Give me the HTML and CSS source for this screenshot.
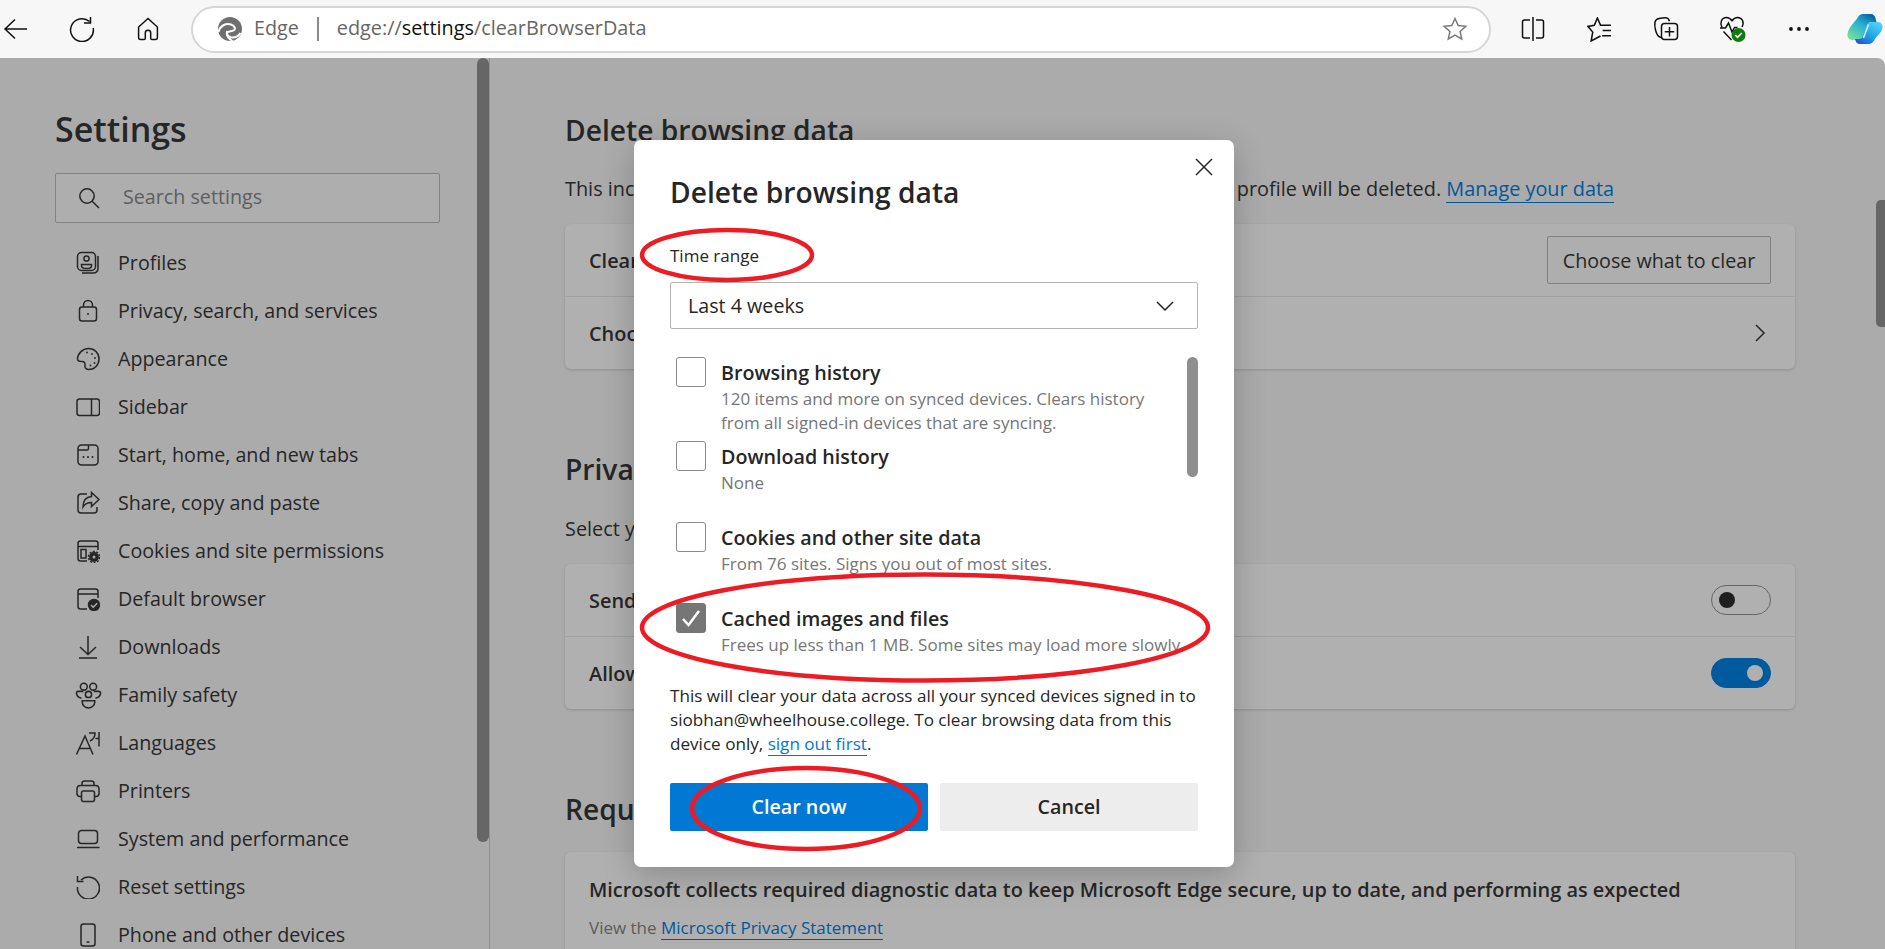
FILE: index.html
```html
<!DOCTYPE html>
<html lang="en">
<head>
  <meta charset="UTF-8" />
  <title>Settings</title>
  <link rel="stylesheet" href="styles.css">
</head>
<body>
  <header class="toolbar">
    <div class="nav-btns">
      <span class="tb-btn"><svg width="26" height="26" viewBox="0 0 26 26"><path d="M24 13H2M12 3.5L2 13l10 9.5"/></svg></span>
      <span class="tb-btn"><svg width="26" height="26" viewBox="0 0 26 26"><path d="M20.5 5.5a11.4 11.4 0 1 0 3.7 6.5M21.5 1v6h-6.5"/></svg></span>
      <span class="tb-btn"><svg width="24" height="26" viewBox="0 0 24 26"><path d="M12 2.5L2.6 11v10.5c0 1.2.8 2 2 2H8c.9 0 1.3-.6 1.3-1.3V17a2.7 2.7 0 0 1 5.4 0v5.200c0 .7.4 1.300 1.300 1.300h3.400c1.200 0 2-.8 2-2V11z"/></svg></span>
    </div>
    <div class="address">
      <svg class="edge-logo" width="26" height="26" viewBox="0 0 26 26">
        <circle cx="13" cy="13" r="12" class="logo-disc"/>
        <path d="M1.500 16C3 9.500 9 7 14 8.500c4 1.200 5 4.500 2.500 6-2 1.200-5.500.5-6.500 2.500-1.200 2.500 2 6 5.500 8 M10 15c-1 3 1 6 4.500 6.500 3 .4 6.500-.6 9-4.500"/>
      </svg>
      <span class="addr-label">Edge</span>
      <span class="addr-sep"></span>
      <span class="addr-url">edge://<b>settings</b>/clearBrowserData</span>
      <svg class="addr-star" width="26" height="26" viewBox="0 0 26 26"><path d="M13 2.500l3.200 7 7.600.8-5.700 5.100 1.600 7.500-6.700-3.900-6.700 3.900 1.600-7.500-5.700-5.100 7.600-.8z"/></svg>
    </div>
    <div class="tool-btns">
      <span class="tb-btn"><svg width="24" height="26" viewBox="0 0 24 26"><path d="M9 4H3.500C2.400 4 1.500 4.900 1.500 6v14c0 1.100.9 2 2 2H9M15 4h5.500c1.100 0 2 .9 2 2v14c0 1.100-.9 2-2 2H15M12 1v24"/></svg></span>
      <span class="tb-btn"><svg width="25" height="25" viewBox="0 0 24 24"><path d="M23 8H13L10 1 7 8 .8 9l4.700 5.500L4 23l9-4.800M15 13h8M14.500 18H23"/></svg></span>
      <span class="tb-btn"><svg width="26" height="26" viewBox="0 0 26 26"><path d="M8 21.500C5.500 21 3.500 18 2.500 14 1.800 11 1.400 8.500 2 6c.5-2 2-3 4-3.500 2.500-.6 5.500-1 7-.8 1.800.2 3 1.500 3.500 3.500"/><rect x="8.500" y="7.500" width="16" height="16" rx="3"/><path d="M16.500 11v9.500M11.800 15.700h9.500"/></svg></span>
      <span class="tb-btn"><svg width="28" height="28" viewBox="0 0 28 28"><path d="M3 12.500C.5 8 2.500 2.500 7.500 2.500c2.500 0 4.300 1.500 5.500 3.200 1.200-1.700 3-3.200 5.500-3.200 5 0 7 5 4.500 9.500M1 13h5.500L9.500 8l3.500 9 2.500-4.500h3M4.500 16.500l8 8.500"/><circle cx="19.500" cy="20" r="7" class="health-dot"/><path d="M16.200 20l2.300 2.300 4.300-4.300" class="health-tick"/></svg></span>
      <span class="tb-btn"><svg width="22" height="6" viewBox="0 0 22 6"><circle cx="3" cy="3" r="1.900" class="solid"/><circle cx="11" cy="3" r="1.900" class="solid"/><circle cx="19" cy="3" r="1.900" class="solid"/></svg></span>
      <span class="tb-btn copilot">
        <svg width="36" height="32" viewBox="0 0 36 32">
          <defs>
            <linearGradient id="cpA" x1="0.800" y1="0" x2="0.100" y2="1"><stop offset="0" stop-color="#0b5f9e"/><stop offset="0.400" stop-color="#22b0d4"/><stop offset="1" stop-color="#7be39a"/></linearGradient>
            <linearGradient id="cpB" x1="0.800" y1="0.100" x2="0.200" y2="1"><stop offset="0" stop-color="#4ccdf7"/><stop offset="0.600" stop-color="#1b9de2"/><stop offset="1" stop-color="#2a4fd8"/></linearGradient>
          </defs>
          <path class="cp-a" d="M11 4C12 2 14 1 16 1h8c2 0 4 2 4.500 4l1 4h-5c-2 0-3.500 1-4 3l-4 13c-.5 1.500-2 2-3.500 2H5c-3 0-5-3-4.500-6C1.500 14 8 9 11 4z"/>
          <path class="cp-b" d="M24.500 9H31c3 0 5 3 4.500 6-1 5-5 7-7.500 11-1.500 3-3.500 5-7 5h-8c-2.500 0-4-1.500-4.500-3.500l-.5-1.500h4c2 0 3.500-1 4-3l4-11c.5-2 2-3 4.500-3z"/>
          <path class="cp-slit" d="M21.500 11.500L16.500 25"/>
        </svg>
      </span>
    </div>
  </header>

  <div class="page">
    <aside class="sidebar">
      <div class="side-content">
        <h1 class="side-title">Settings</h1>
        <div class="search">
          <svg width="24" height="24" viewBox="0 0 24 24"><circle cx="10" cy="10" r="7.200"/><path d="M15.200 15.200L22 22"/></svg>
          <span>Search settings</span>
        </div>
        <nav class="side-nav">
          <a class="side-link"><svg viewBox="0 0 24 24"><rect x="1.500" y="1.500" width="18" height="18" rx="4"/><circle cx="10.500" cy="7.500" r="2.600"/><path d="M5.500 13.500h10v1.500c0 1.500-2 2.500-5 2.500s-5-1-5-2.500zM22 5v12c0 3-2 5-5 5H6"/></svg>Profiles</a>
          <a class="side-link"><svg viewBox="0 0 24 24"><rect x="3.500" y="8" width="17" height="14" rx="2.500"/><path d="M7.500 8V6a4.500 4.500 0 0 1 9 0v2"/><circle cx="12" cy="15" r="1" class="solid"/></svg>Privacy, search, and services</a>
          <a class="side-link"><svg viewBox="0 0 24 24"><path d="M12.500 1.500c6 0 10.500 4.700 10.500 10.500s-4.500 10.500-10 10.500c-3 0-4.500-2-4-4.500.4-2-.7-3.500-3-3.500-2 0-4.500 0-4.500-2.500 0-5 5-10.500 11-10.500z"/><circle cx="11" cy="5.500" r=".9" class="solid"/><circle cx="16" cy="7" r=".9" class="solid"/><circle cx="19" cy="11" r=".9" class="solid"/><circle cx="18.500" cy="16" r=".9" class="solid"/><circle cx="14.500" cy="18.500" r=".9" class="solid"/></svg>Appearance</a>
          <a class="side-link"><svg viewBox="0 0 24 24"><rect x="1" y="4" width="22.500" height="16.500" rx="2.500"/><path d="M15.500 4v16.500"/></svg>Sidebar</a>
          <a class="side-link"><svg viewBox="0 0 24 24"><rect x="2" y="2" width="20" height="20" rx="3.500"/><path d="M2 7h9c1 0 1.500-.5 1.500-1.500V2"/><circle cx="7.500" cy="14" r="1" class="solid"/><circle cx="12" cy="14" r="1" class="solid"/><circle cx="16.500" cy="14" r="1" class="solid"/></svg>Start, home, and new tabs</a>
          <a class="side-link"><svg viewBox="0 0 24 24"><path d="M11 3H5C3.300 3 2 4.300 2 6v13c0 1.700 1.300 3 3 3h13c1.700 0 3-1.300 3-3v-3"/><path d="M15.500 1.500L23 8.500l-7.500 7v-4c-4 0-6.500 1-8.500 4.500 0-6 3-10 8.500-10.500z"/></svg>Share, copy and paste</a>
          <a class="side-link"><svg viewBox="0 0 24 24"><path d="M11 22H4.500C3 22 2 21 2 19.500v-15C2 3 3 2 4.500 2h15C21 2 22 3 22 4.500V11M2 7.500h20"/><rect x="5" y="10.500" width="5" height="8.500"/><circle cx="18" cy="18" r="3.200" class="gear-hub"/><circle cx="18" cy="18" r="5.600" class="gear-teeth"/></svg>Cookies and site permissions</a>
          <a class="side-link"><svg viewBox="0 0 24 24"><path d="M11 22H4.500C3 22 2 21 2 19.500v-15C2 3 3 2 4.500 2h15C21 2 22 3 22 4.500V11M2 7h20"/><circle cx="18" cy="18" r="6.200" class="solid"/><path d="M15 18l2.200 2.200 4-4" class="badge-tick"/></svg>Default browser</a>
          <a class="side-link"><svg viewBox="0 0 24 24"><path d="M12 1v18M4 12l8 7.500 8-7.500M3 23h18"/></svg>Downloads</a>
          <a class="side-link"><svg viewBox="0 0 26 26" class="wide"><circle cx="8.500" cy="4.500" r="3.300"/><circle cx="17.500" cy="4.500" r="3.300"/><circle cx="13" cy="12" r="3"/><path d="M8 9H3c-1 0-1.800.8-1.600 2 .4 2.500 2.500 4.200 5 4.700M18 9h5c1 0 1.800.8 1.600 2-.4 2.500-2.500 4.200-5 4.700M7 18h12v1.500c0 3-3 5.500-6 5.500s-6-2.500-6-5.500z"/></svg>Family safety</a>
          <a class="side-link"><svg viewBox="0 0 24 24"><path d="M.5 23.500L9 5l8 18.500M3.500 17.500h11M13 2h6c0 4-1.500 6.500-5 8M23 1v14.500M19.500 7.500H23"/></svg>Languages</a>
          <a class="side-link"><svg viewBox="0 0 24 24"><path d="M6 6.500V4.500C6 3 7 2 8.500 2h7C17 2 18 3 18 4.500v2M6 17.500H4c-1.700 0-3-1.300-3-3V10c0-2 1.500-3.500 3.500-3.500h15c2 0 3.500 1.500 3.500 3.500v4.500c0 1.700-1.300 3-3 3h-2"/><rect x="5.500" y="12" width="13" height="10.500" rx="2"/></svg>Printers</a>
          <a class="side-link"><svg viewBox="0 0 24 24"><rect x="2.500" y="3.500" width="19" height="13" rx="3"/><path d="M1 20.500h22.500"/></svg>System and performance</a>
          <a class="side-link"><svg viewBox="0 0 24 24"><path d="M5 5a11 11 0 1 1-3.500 7M1.500 1v5.500H7.500"/></svg>Reset settings</a>
          <a class="side-link"><svg viewBox="0 0 24 24"><rect x="5" y="1" width="14" height="22" rx="2.500"/><path d="M10.500 19h3"/></svg>Phone and other devices</a>
        </nav>
      </div>
      <div class="side-scroll"></div>
    </aside>

    <main class="main">
      <div class="content">
        <h2 class="sec-title">Delete browsing data</h2>
        <p class="sec-desc">This includes history, passwords, cookies, and more. Only data from this profile will be deleted. <a class="link">Manage your data</a></p>
        <section class="card">
          <div class="row"><span class="row-label">Clear browsing data now</span><button class="outline-btn">Choose what to clear</button></div>
          <div class="row"><span class="row-label">Choose what to clear every time you close the browser</span><svg class="chev" width="12" height="20" viewBox="0 0 12 20"><path d="M2 2l8 8-8 8"/></svg></div>
        </section>

        <h2 class="sec-title sec-gap">Privacy</h2>
        <p class="sec-desc sec-desc-tall">Select your privacy settings for Microsoft Edge.</p>
        <section class="card">
          <div class="row"><span class="row-label">Send "Do Not Track" requests</span><span class="toggle"></span></div>
          <div class="row"><span class="row-label">Allow sites to check if you have payment methods saved</span><span class="toggle on"></span></div>
        </section>

        <h2 class="sec-title sec-gap">Required diagnostic data</h2>
        <section class="card card-text">
          <p class="row-label">Microsoft collects required diagnostic data to keep Microsoft Edge secure, up to date, and performing as expected</p>
          <p class="card-note">View the <a class="link">Microsoft Privacy Statement</a></p>
        </section>
      </div>
      <div class="page-scroll"></div>
    </main>
  </div>

  <div class="dialog">
    <svg class="close" width="18" height="18" viewBox="0 0 18 18"><path d="M1 1l16 16M17 1L1 17"/></svg>
    <h2 class="dlg-title">Delete browsing data</h2>
    <div class="field-label">Time range</div>
    <div class="select">
      <span>Last 4 weeks</span>
      <svg width="18" height="10" viewBox="0 0 18 10"><path d="M1 1l8 8 8-8"/></svg>
    </div>
    <div class="list">
      <div class="items">
        <div class="item two-line">
          <span class="check"></span>
          <div><div class="item-name">Browsing history</div><div class="item-desc">120 items and more on synced devices. Clears history<br>from all signed-in devices that are syncing.</div></div>
        </div>
        <div class="item short">
          <span class="check"></span>
          <div><div class="item-name">Download history</div><div class="item-desc">None</div></div>
        </div>
        <div class="item">
          <span class="check"></span>
          <div><div class="item-name">Cookies and other site data</div><div class="item-desc">From 76 sites. Signs you out of most sites.</div></div>
        </div>
        <div class="item">
          <span class="check checked"><svg width="20" height="18" viewBox="0 0 20 18"><path d="M2 10l5.500 6L18 2"/></svg></span>
          <div><div class="item-name">Cached images and files</div><div class="item-desc">Frees up less than 1 MB. Some sites may load more slowly.</div></div>
        </div>
      </div>
      <div class="list-scroll"></div>
    </div>
    <p class="dlg-note">This will clear your data across all your synced devices signed in to<br>siobhan@wheelhouse.college. To clear browsing data from this<br>device only, <a class="dlg-link">sign out first</a>.</p>
    <div class="dlg-btns">
      <button class="btn primary">Clear now</button>
      <button class="btn">Cancel</button>
    </div>
    <svg class="marks" width="600" height="727" viewBox="0 0 600 727">
      <ellipse cx="93" cy="115" rx="85" ry="25"/>
      <ellipse cx="291" cy="487.500" rx="283" ry="53"/>
      <ellipse cx="172" cy="668.500" rx="114" ry="40.500"/>
    </svg>
  </div>
</body>
</html>
```

FILE: styles.css
```css
* {
  box-sizing: border-box;
}

body {
  margin: 0;
  height: 949px;
  overflow: hidden;
  position: relative;
  background: #f7f7f7;
  color: #262626;
  font-family: "Open Sans", "Noto Sans", sans-serif;
  font-size: 19.700px;
}

p, h1, h2 {
  margin: 0;
}

svg path, svg circle, svg rect {
  fill: none;
  stroke: currentColor;
  stroke-width: 1.5;
}

svg .solid {
  fill: currentColor;
  stroke: none;
}

/* browser toolbar */
.toolbar {
  display: flex;
  align-items: center;
  height: 58px;
  color: #111;
}

.nav-btns {
  display: flex;
  gap: 34px;
  flex: 0 0 191px;
}

.tb-btn {
  display: flex;
  align-items: center;
  justify-content: center;
  width: 32px;
  height: 32px;
}

.tb-btn svg {
  flex: none;
}

.address {
  display: flex;
  align-items: center;
  width: 1300px;
  height: 47px;
  padding: 0 21px 0 24px;
  background: #fff;
  border: 2px solid #d6d6d6;
  border-radius: 24px;
  color: #666;
}

.edge-logo {
  flex: none;
}

.edge-logo .logo-disc {
  fill: #6f6f6f;
  stroke: none;
}

.edge-logo path {
  stroke: #fff;
  stroke-width: 2;
}

.addr-label {
  margin: 0 0 3px 11px;
}

.addr-sep {
  width: 2px;
  height: 24px;
  margin: 0 18px;
  background: #8a8a8a;
}

.addr-url {
  margin-bottom: 3px;
  font-size: 19.850px;
}

.addr-url b {
  color: #111;
  font-weight: 400;
}

.addr-star {
  margin-left: auto;
  color: #7a7a7a;
}

.tool-btns {
  display: flex;
  gap: 34.500px;
  margin-left: 26px;
}

.health-dot {
  fill: #107c10;
  stroke: none;
}

svg .health-tick {
  stroke: #fff;
  stroke-width: 1.6;
}

.copilot {
  flex: none;
  margin-left: -1px;
}

.copilot .cp-a {
  fill: url(#cpA);
  stroke: none;
}

.copilot .cp-b {
  fill: url(#cpB);
  stroke: none;
}

.copilot .cp-slit {
  stroke: #d8f4fb;
  stroke-width: 1.500;
}

/* dimmed settings page */
.page {
  display: flex;
  height: 891px;
  background: #ababab;
  border-top-right-radius: 8px;
}

.sidebar {
  display: flex;
  align-items: flex-start;
  flex: 0 0 490px;
  height: 100%;
  border-right: 1px solid #8f8f8f;
  overflow: hidden;
}

.side-content {
  flex: 1;
  padding: 49px 37px 0 55px;
}

.side-title {
  height: 44px;
  font-size: 34px;
  font-weight: 600;
  line-height: 44px;
}

.search {
  display: flex;
  align-items: center;
  gap: 22px;
  height: 50px;
  margin-top: 22px;
  padding-left: 21px;
  background: #aeaeae;
  border: 1px solid #828282;
  border-radius: 2px;
  color: #5e5e5e;
}

.search span {
  margin-bottom: 3px;
}

.search svg {
  color: #262626;
}

.side-nav {
  margin-top: 16px;
}

.side-link {
  display: flex;
  align-items: center;
  gap: 18px;
  height: 48px;
  padding: 0 0 2px 21px;
  white-space: nowrap;
}

.side-link svg {
  flex: none;
  width: 24px;
  height: 24px;
  margin-top: 2px;
}

.side-link svg.wide {
  width: 27px;
  height: 27px;
  margin: 2px -1.500px 0;
}

.gear-hub {
  stroke-width: 3.400;
}

.gear-teeth {
  stroke-width: 1.400;
  stroke-dasharray: 2 1.500;
}

svg .badge-tick {
  stroke: #b0b0b0;
  stroke-width: 1.400;
}

.side-scroll {
  flex: none;
  width: 12px;
  height: 784px;
  background: #666;
  border-radius: 6px;
}

.main {
  display: flex;
  justify-content: space-between;
  flex: 1;
  overflow: hidden;
}

.content {
  width: 1305px;
  padding: 52px 0 0 75px;
  flex: none;
}

.sec-title {
  height: 40px;
  font-size: 28.200px;
  font-weight: 600;
  line-height: 40px;
  white-space: nowrap;
}

.sec-gap {
  margin-top: 80px;
}

.sec-desc {
  margin-top: 27px;
  font-size: 19.860px;
  line-height: 24px;
}

.sec-desc-tall {
  margin-top: 28px;
}

.link {
  color: #00589b;
  border-bottom: 1px solid #00589b;
}

.card {
  margin-top: 23px;
  background: #b0b0b0;
  border-radius: 6px;
  box-shadow: 0 1px 3px rgba(0, 0, 0, 0.16);
}

.row {
  display: flex;
  align-items: center;
  justify-content: space-between;
  height: 72px;
  padding: 0 24px;
}

.row + .row {
  border-top: 1px solid #a0a0a0;
  height: 73px;
}

.row-label {
  font-size: 19.900px;
  font-weight: 600;
}

.outline-btn {
  width: 224px;
  height: 48px;
  padding: 0;
  font: inherit;
  color: inherit;
  background: #aeaeae;
  border: 1px solid #808080;
  border-radius: 2px;
}

.chev {
  margin-right: 5px;
}

.toggle {
  display: flex;
  align-items: center;
  width: 60px;
  height: 30px;
  padding: 0 7px;
  border: 1px solid #666;
  border-radius: 15px;
}

.toggle::after {
  content: "";
  width: 16px;
  height: 16px;
  border-radius: 50%;
  background: #1f1f1f;
}

.toggle.on {
  justify-content: flex-end;
  background: #005a9e;
  border-color: #005a9e;
}

.toggle.on::after {
  background: #b0b0b0;
}

.card-text {
  height: 120px;
  padding: 26px 24px 0;
  line-height: 24px;
}

.card-note {
  margin-top: 14px;
  font-size: 17px;
  color: #5c5c5c;
}

.page-scroll {
  flex: none;
  width: 9px;
  height: 127px;
  margin-top: 142px;
  background: #666;
  border-radius: 5px 0 0 5px;
}

/* dialog over the page */
.dialog {
  position: absolute;
  left: 634px;
  top: 140px;
  width: 600px;
  height: 727px;
  padding: 32px 36px 0;
  background: #fff;
  border-radius: 7px;
  box-shadow: 0 8px 32px rgba(0, 0, 0, 0.22);
}

.close {
  position: absolute;
  top: 18px;
  right: 21px;
}

.dlg-title {
  height: 40px;
  font-size: 28.200px;
  font-weight: 600;
  line-height: 40px;
}

.field-label {
  margin-top: 32px;
  font-size: 17px;
  line-height: 24px;
}

.select {
  display: flex;
  align-items: center;
  justify-content: space-between;
  height: 47px;
  margin-top: 14px;
  padding: 0 23px 0 17px;
  border: 1px solid #b3b3b3;
  border-radius: 2px;
}

.list {
  display: flex;
  height: 327px;
  margin-top: 28px;
  overflow: hidden;
}

.items {
  flex: 1;
  padding-left: 6px;
}

.item {
  display: flex;
  gap: 15px;
  height: 81px;
}

.item.two-line {
  height: 84px;
}

.check {
  flex: none;
  display: flex;
  align-items: center;
  justify-content: center;
  width: 30px;
  height: 30px;
  border: 1px solid #8a8a8a;
  border-radius: 3px;
  color: #fff;
}

.check.checked {
  background: #767676;
  border-color: #767676;
}

.check svg path {
  stroke-width: 2.500;
}

.item-name {
  margin-top: 3px;
  font-weight: 600;
  line-height: 26px;
  white-space: nowrap;
}

.item-desc {
  margin-top: 1px;
  font-size: 17px;
  line-height: 24px;
  color: #767676;
  white-space: nowrap;
}

.list-scroll {
  flex: none;
  width: 11px;
  height: 120px;
  background: #8f8f8f;
  border-radius: 6px;
}

.dlg-note {
  font-size: 17.100px;
  line-height: 24px;
  white-space: nowrap;
}

.dlg-link {
  color: #0078d4;
  border-bottom: 1px solid #0078d4;
}

.dlg-btns {
  display: grid;
  grid-template-columns: 1fr 1fr;
  gap: 12px;
  margin-top: 27px;
}

.btn {
  height: 48px;
  padding: 0 0 1px;
  font: inherit;
  font-weight: 600;
  color: #262626;
  background: #ededed;
  border: 0;
  border-radius: 2px;
}

.btn.primary {
  color: #fff;
  background: #0078d4;
}

.marks {
  position: absolute;
  left: 0;
  top: 0;
  pointer-events: none;
}

.marks ellipse {
  fill: none;
  stroke: #ed1c24;
  stroke-width: 4.500;
}
```
